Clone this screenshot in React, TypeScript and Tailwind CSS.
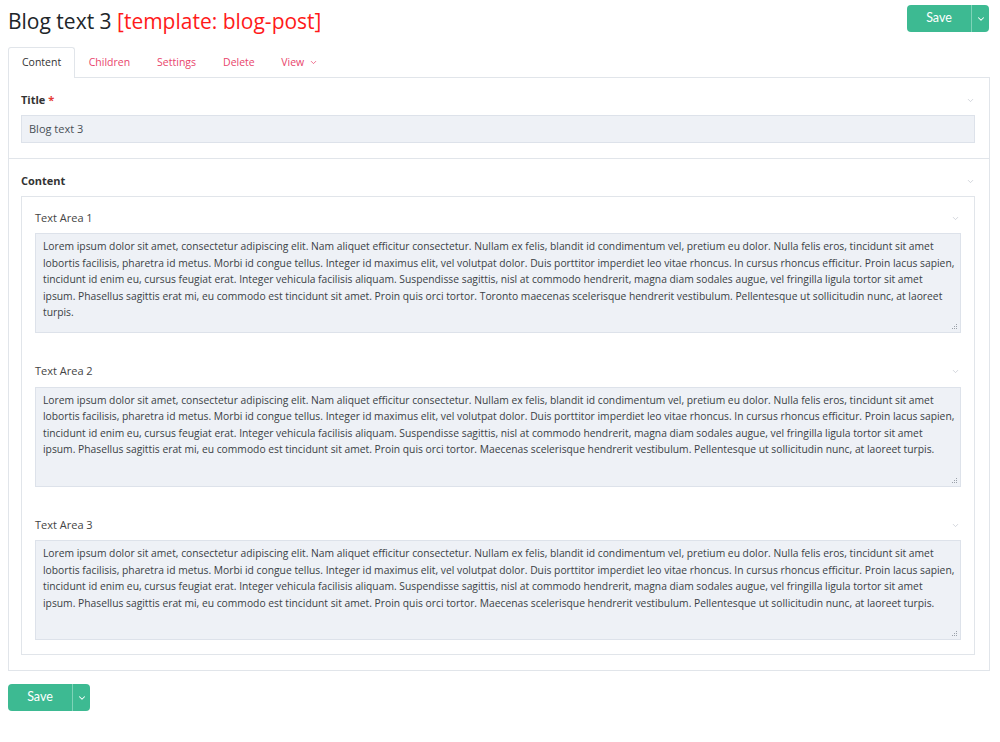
import { ChevronDown } from "lucide-react";

const sans = "font-['Segoe_UI','Open_Sans',sans-serif]";

const para1 = [
  "Lorem ipsum dolor sit amet, consectetur adipiscing elit. Nam aliquet efficitur consectetur. Nullam ex felis, blandit id condimentum vel, pretium eu dolor. Nulla felis eros, tincidunt sit amet",
  "lobortis facilisis, pharetra id metus. Morbi id congue tellus. Integer id maximus elit, vel volutpat dolor. Duis porttitor imperdiet leo vitae rhoncus. In cursus rhoncus efficitur. Proin lacus sapien,",
  "tincidunt id enim eu, cursus feugiat erat. Integer vehicula facilisis aliquam. Suspendisse sagittis, nisl at commodo hendrerit, magna diam sodales augue, vel fringilla ligula tortor sit amet",
  "ipsum. Phasellus sagittis erat mi, eu commodo est tincidunt sit amet. Proin quis orci tortor. Toronto maecenas scelerisque hendrerit vestibulum. Pellentesque ut sollicitudin nunc, at laoreet",
  "turpis.",
];

const para2 = [
  "Lorem ipsum dolor sit amet, consectetur adipiscing elit. Nam aliquet efficitur consectetur. Nullam ex felis, blandit id condimentum vel, pretium eu dolor. Nulla felis eros, tincidunt sit amet",
  "lobortis facilisis, pharetra id metus. Morbi id congue tellus. Integer id maximus elit, vel volutpat dolor. Duis porttitor imperdiet leo vitae rhoncus. In cursus rhoncus efficitur. Proin lacus sapien,",
  "tincidunt id enim eu, cursus feugiat erat. Integer vehicula facilisis aliquam. Suspendisse sagittis, nisl at commodo hendrerit, magna diam sodales augue, vel fringilla ligula tortor sit amet",
  "ipsum. Phasellus sagittis erat mi, eu commodo est tincidunt sit amet. Proin quis orci tortor. Maecenas scelerisque hendrerit vestibulum. Pellentesque ut sollicitudin nunc, at laoreet turpis.",
];

const areas = [
  { label: "Text Area 1", lines: para1 },
  { label: "Text Area 2", lines: para2 },
  { label: "Text Area 3", lines: para2 },
];

function Fold() {
  return <ChevronDown className="w-[9px] h-[9px] text-[#c5cad1]" strokeWidth={2} />;
}

function Grip() {
  return (
    <svg width="7" height="7" viewBox="0 0 7 7" className="absolute right-[2px] bottom-[2px]">
      <rect x="5" y="1" width="1" height="1" fill="#9aa1a9" />
      <rect x="3" y="3" width="1" height="1" fill="#9aa1a9" />
      <rect x="5" y="3" width="1" height="1" fill="#9aa1a9" />
      <rect x="1" y="5" width="1" height="1" fill="#9aa1a9" />
      <rect x="3" y="5" width="1" height="1" fill="#9aa1a9" />
      <rect x="5" y="5" width="1" height="1" fill="#9aa1a9" />
    </svg>
  );
}

function SaveButton() {
  return (
    <div className="flex h-[27px] rounded-[4px] bg-[#3dba92] text-white font-['Lato',sans-serif] text-[12.5px] overflow-hidden">
      <button className="w-[64px] flex items-center justify-center">Save</button>
      <div className="w-px bg-[#7fd3b8]" />
      <button className="w-[17px] flex items-center justify-center">
        <ChevronDown className="w-[10px] h-[10px]" strokeWidth={2.5} />
      </button>
    </div>
  );
}

export default function App() {
  return (
    <div className={`min-h-[742px] bg-white pl-2 pr-[10px] ${sans} text-[#212529]`}>
      {/* Header */}
      <div className="flex items-start justify-between pt-[5px] h-[47px]">
        <h1 className="text-[21px] leading-[30px] pt-[1px]">
          Blog text 3 <span className="text-[#ff1a1a]">[template: blog-post]</span>
        </h1>
        <div className="mr-[1px]">
          <SaveButton />
        </div>
      </div>

      {/* Tabs */}
      <div className="flex text-[10.5px] h-[31px] -mb-px">
        <div className="px-[13px] flex items-center border border-b-0 border-[#e1e5ea] rounded-t-[3px] bg-white text-[#333] relative z-10">
          Content
        </div>
        {["Children", "Settings", "Delete"].map((t) => (
          <div key={t} className="px-[13.5px] flex items-center text-[#e9446c]">
            {t}
          </div>
        ))}
        <div className="px-[13px] flex items-center gap-[5px] text-[#e9446c]">
          View
          <ChevronDown className="w-[9px] h-[9px]" strokeWidth={2} />
        </div>
      </div>

      {/* Panel */}
      <div className="border border-[#e1e5ea]">
        {/* Title */}
        <section className="pl-[12px] pr-[14px] pt-[14px] pb-[15px] border-b border-[#e1e5ea]">
          <div className="flex items-center justify-between h-[16px] mb-[7px]">
            <span className="text-[11px] font-bold text-[#333]">
              Title <span className="text-[#e53935]">*</span>
            </span>
            <Fold />
          </div>
          <div className="h-[28px] bg-[#eef1f6] border border-[#dde2ea] flex items-center px-[7px] text-[11px] text-[#495057]">
            Blog text 3
          </div>
        </section>

        {/* Content */}
        <section className="pl-[12px] pr-[14px] pt-[14px] pb-[15px]">
          <div className="flex items-center justify-between h-[16px] mb-[7px]">
            <span className="text-[11px] font-bold text-[#333]">Content</span>
            <Fold />
          </div>
          <div className="border border-[#e1e5ea] px-[13px] pt-[13px] pb-[14px] flex flex-col gap-[30.5px]">
            {areas.map((a) => (
              <div key={a.label}>
                <div className="flex items-center justify-between h-[16px] mb-[7px] pr-[1px]">
                  <span className="text-[11px] text-[#444]">{a.label}</span>
                  <Fold />
                </div>
                <div className="relative h-[100px] bg-[#eef1f6] border border-[#dde2ea] px-[7px] pt-[4px] text-[10.3px] leading-[16.5px] text-[#3a3f45] overflow-hidden">
                  {a.lines.map((l, i) => (
                    <div key={i} className="whitespace-nowrap">
                      {l}
                    </div>
                  ))}
                  <Grip />
                </div>
              </div>
            ))}
          </div>
        </section>
      </div>

      {/* Footer */}
      <div className="pt-[13px] flex">
        <SaveButton />
      </div>
    </div>
  );
}
